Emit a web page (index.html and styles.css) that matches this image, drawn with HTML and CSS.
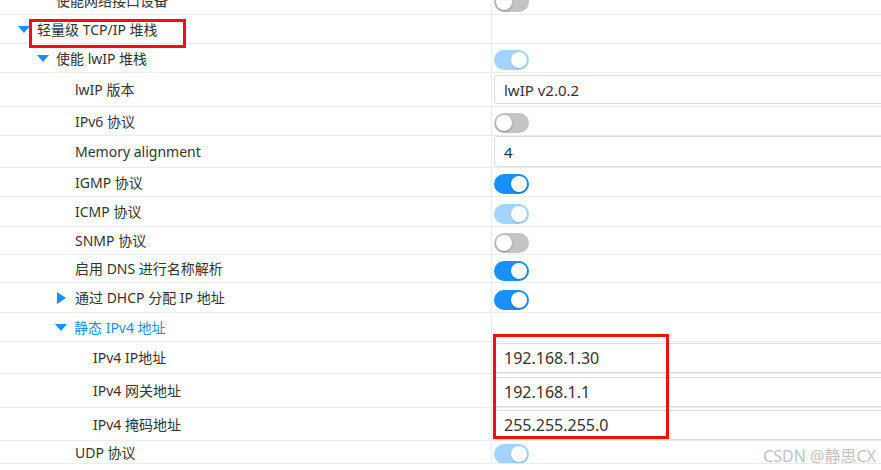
FILE: index.html
```html
<!DOCTYPE html>
<html lang="zh-CN">
<head>
<meta charset="utf-8">
<title>lwIP 配置</title>
<link rel="stylesheet" href="styles.css">
</head>
<body>
<div class="page">
  <div class="table">
    <div class="row h29 first">
      <div class="label l1"><span class="arrow"></span><span class="text">使能网络接口设备</span></div>
      <div class="value"><span class="toggle off"></span></div>
    </div>
    <div class="row h29">
      <div class="label l0"><span class="arrow"><svg width="12" height="7" viewBox="0 0 12 7"><path d="M0 0H12L6 7Z" fill="#1890ff"/></svg></span><span class="text">轻量级 TCP/IP 堆栈</span></div>
      <div class="value"></div>
    </div>
    <div class="row h29">
      <div class="label l1"><span class="arrow"><svg width="12" height="7" viewBox="0 0 12 7"><path d="M0 0H12L6 7Z" fill="#1890ff"/></svg></span><span class="text">使能 lwIP 堆栈</span></div>
      <div class="value"><span class="toggle dis"></span></div>
    </div>
    <div class="row h34">
      <div class="label l2"><span class="arrow"></span><span class="text">lwIP 版本</span></div>
      <div class="value"><div class="input">lwIP v2.0.2</div></div>
    </div>
    <div class="row h29">
      <div class="label l2"><span class="arrow"></span><span class="text">IPv6 协议</span></div>
      <div class="value"><span class="toggle off"></span></div>
    </div>
    <div class="row h32">
      <div class="label l2"><span class="arrow"></span><span class="text">Memory alignment</span></div>
      <div class="value"><div class="input tall">4</div></div>
    </div>
    <div class="row h29">
      <div class="label l2"><span class="arrow"></span><span class="text">IGMP 协议</span></div>
      <div class="value"><span class="toggle on"></span></div>
    </div>
    <div class="row h30">
      <div class="label l2"><span class="arrow"></span><span class="text">ICMP 协议</span></div>
      <div class="value"><span class="toggle dis"></span></div>
    </div>
    <div class="row h28">
      <div class="label l2"><span class="arrow"></span><span class="text">SNMP 协议</span></div>
      <div class="value"><span class="toggle off"></span></div>
    </div>
    <div class="row h28">
      <div class="label l2"><span class="arrow"></span><span class="text">启用 DNS 进行名称解析</span></div>
      <div class="value"><span class="toggle on"></span></div>
    </div>
    <div class="row h30">
      <div class="label l2r"><span class="arrow"><svg width="9" height="12" viewBox="0 0 9 12"><path d="M0 0V12L9 6Z" fill="#1890ff"/></svg></span><span class="text">通过 DHCP 分配 IP 地址</span></div>
      <div class="value"><span class="toggle on"></span></div>
    </div>
    <div class="row h29">
      <div class="label l2x"><span class="arrow"><svg width="12" height="7" viewBox="0 0 12 7"><path d="M0 0H12L6 7Z" fill="#1890ff"/></svg></span><span class="text blue">静态 IPv4 地址</span></div>
      <div class="value"></div>
    </div>
    <div class="row h32">
      <div class="label l3"><span class="arrow"></span><span class="text">IPv4 IP地址</span></div>
      <div class="value top1"><div class="input ip">192.168.1.30</div></div>
    </div>
    <div class="row h34">
      <div class="label l3"><span class="arrow"></span><span class="text">IPv4 网关地址</span></div>
      <div class="value top3"><div class="input ip">192.168.1.1</div></div>
    </div>
    <div class="row h33">
      <div class="label l3"><span class="arrow"></span><span class="text">IPv4 掩码地址</span></div>
      <div class="value top2"><div class="input ip">255.255.255.0</div></div>
    </div>
    <div class="row h22 last">
      <div class="label l2"><span class="arrow"></span><span class="text">UDP 协议</span></div>
      <div class="value"><span class="toggle dis"></span></div>
    </div>
  </div>
  <div class="mark mark-a"></div>
  <div class="mark mark-b"></div>
  <div class="watermark">CSDN @静思CX</div>
</div>
</body>
</html>
```
FILE: styles.css
```css
* { box-sizing: border-box; }
html, body {
  margin: 0;
  padding: 0;
  background: #ffffff;
  width: 881px;
  height: 470px;
  overflow: hidden;
}
body {
  font-family: "Noto Sans", "Noto Sans CJK SC", sans-serif;
  font-size: 14px;
  color: #333333;
}
.page {
  position: relative;
  width: 881px;
  height: 470px;
  overflow: hidden;
}
.table {
  margin-top: -14px;
}
.row {
  display: grid;
  grid-template-columns: 492px 1fr;
  border-bottom: 1px solid #ececec;
}
.h22 { height: 23px; }
.h28 { height: 28px; }
.h29 { height: 29px; }
.h30 { height: 30px; }
.h32 { height: 32px; }
.h33 { height: 33px; }
.h34 { height: 34px; }
.label {
  display: flex;
  align-items: center;
  border-right: 1px solid #ececec;
  white-space: nowrap;
  line-height: 1;
}
.l0 { padding-left: 18px; }
.l1 { padding-left: 37px; }
.l2 { padding-left: 56px; }
.l2r { padding-left: 57px; }
.l2x { padding-left: 55px; }
.l3 { padding-left: 74px; }
.arrow {
  width: 19px;
  flex: none;
  display: flex;
  align-items: center;
}
.l2r .arrow { width: 18px; }
.arrow svg { display: block; }
.text { padding-top: 1px; }
.blue { color: #1890ff; }
.value {
  display: flex;
  align-items: center;
  padding-left: 2px;
  overflow: hidden;
}
.value.top1 { align-items: flex-start; padding-top: 1px; }
.value.top2 { align-items: flex-start; padding-top: 2px; }
.value.top3 { align-items: flex-start; padding-top: 3px; }
.toggle {
  position: relative;
  display: block;
  width: 35px;
  height: 20px;
  border-radius: 10px;
  margin-top: 4px;
  flex: none;
}
.toggle::after {
  content: "";
  position: absolute;
  top: 2px;
  width: 16px;
  height: 16px;
  border-radius: 50%;
  background: #ffffff;
  box-shadow: 0 1px 2px rgba(0, 0, 0, 0.3);
}
.toggle.off { background: #c4c4c4; }
.toggle.off::after { left: 2px; }
.toggle.on { background: #1890ff; }
.toggle.on::after { right: 2px; }
.toggle.dis { background: #a3d3ff; }
.toggle.dis::after { right: 2px; box-shadow: 0 1px 2px rgba(0, 0, 0, 0.15); }
.input {
  flex: none;
  width: 440px;
  height: 29px;
  border: 1px solid #dcdcdc;
  border-radius: 3px;
  padding-left: 9px;
  display: flex;
  align-items: center;
  font-size: 15px;
  color: #333333;
  white-space: nowrap;
}
.input.tall { height: 31px; }
.input.ip { height: 30px; font-size: 16px; border-radius: 2px; }
.mark {
  position: absolute;
  border: 3px solid #ee1111;
}
.mark-a { left: 29px; top: 19px; width: 157px; height: 29px; }
.mark-b { left: 493px; top: 334px; width: 176px; height: 105px; }
.watermark {
  position: absolute;
  right: 5px;
  top: 443px;
  font-size: 16px;
  color: #c2c2c2;
  white-space: nowrap;
}
```
